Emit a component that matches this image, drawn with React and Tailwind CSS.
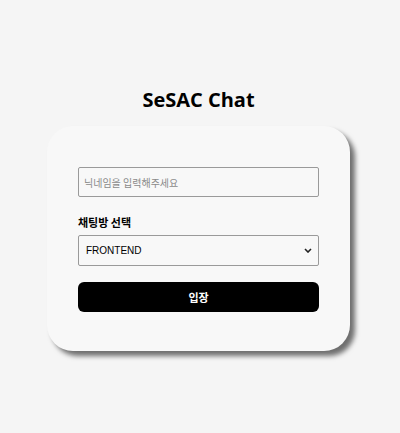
import React from 'react';

const App = () => {
  return (
    <div className="min-h-[433px] w-full bg-[#f5f5f5]">
      <div className="w-[397px] flex flex-col items-center pt-[86px] font-['Noto_Sans','Noto_Sans_CJK_KR',sans-serif]">
        <h2 className="text-[20px] font-bold leading-[28px] text-black font-['Open_Sans','Noto_Sans_CJK_KR',sans-serif]">
          SeSAC Chat
        </h2>

        {/* Login card */}
        <div className="mt-[12px] w-[303px] rounded-[26px] bg-[#f8f8f8] px-[31px] pt-[41px] pb-[39px] shadow-[5px_5px_5px_rgba(0,0,0,0.55)]">
          <input
            type="text"
            placeholder="닉네임을 입력해주세요"
            className="block w-full h-[30px] px-[5px] rounded-[2px] border border-[#9a9a9a] bg-[#f8f8f8] text-[10px] outline-none placeholder:text-[#8a8a8a] font-['Noto_Sans_CJK_KR',sans-serif]"
          />

          <label className="block mt-[18px] mb-[6px] text-[11px] font-bold leading-[14px] text-black font-['Noto_Sans_CJK_KR',sans-serif]">
            채팅방 선택
          </label>

          <div className="relative h-[31px] rounded-[2px] border border-[#9a9a9a] bg-[#f8f8f8] flex items-center px-[7px]">
            <span className="text-[10px] text-black font-['Liberation_Sans',Arial,sans-serif]">FRONTEND</span>
            <svg className="absolute right-[6px] top-[12px]" width="8" height="5" viewBox="0 0 8 5">
              <path d="M1 1 L4 4 L7 1" fill="none" stroke="#222" strokeWidth="1.6" />
            </svg>
          </div>

          <button className="mt-[16px] w-full h-[30px] rounded-[6px] bg-black text-white text-[11px] font-bold font-['Noto_Sans_CJK_KR',sans-serif]">
            입장
          </button>
        </div>
      </div>
    </div>
  );
};

export default App;
